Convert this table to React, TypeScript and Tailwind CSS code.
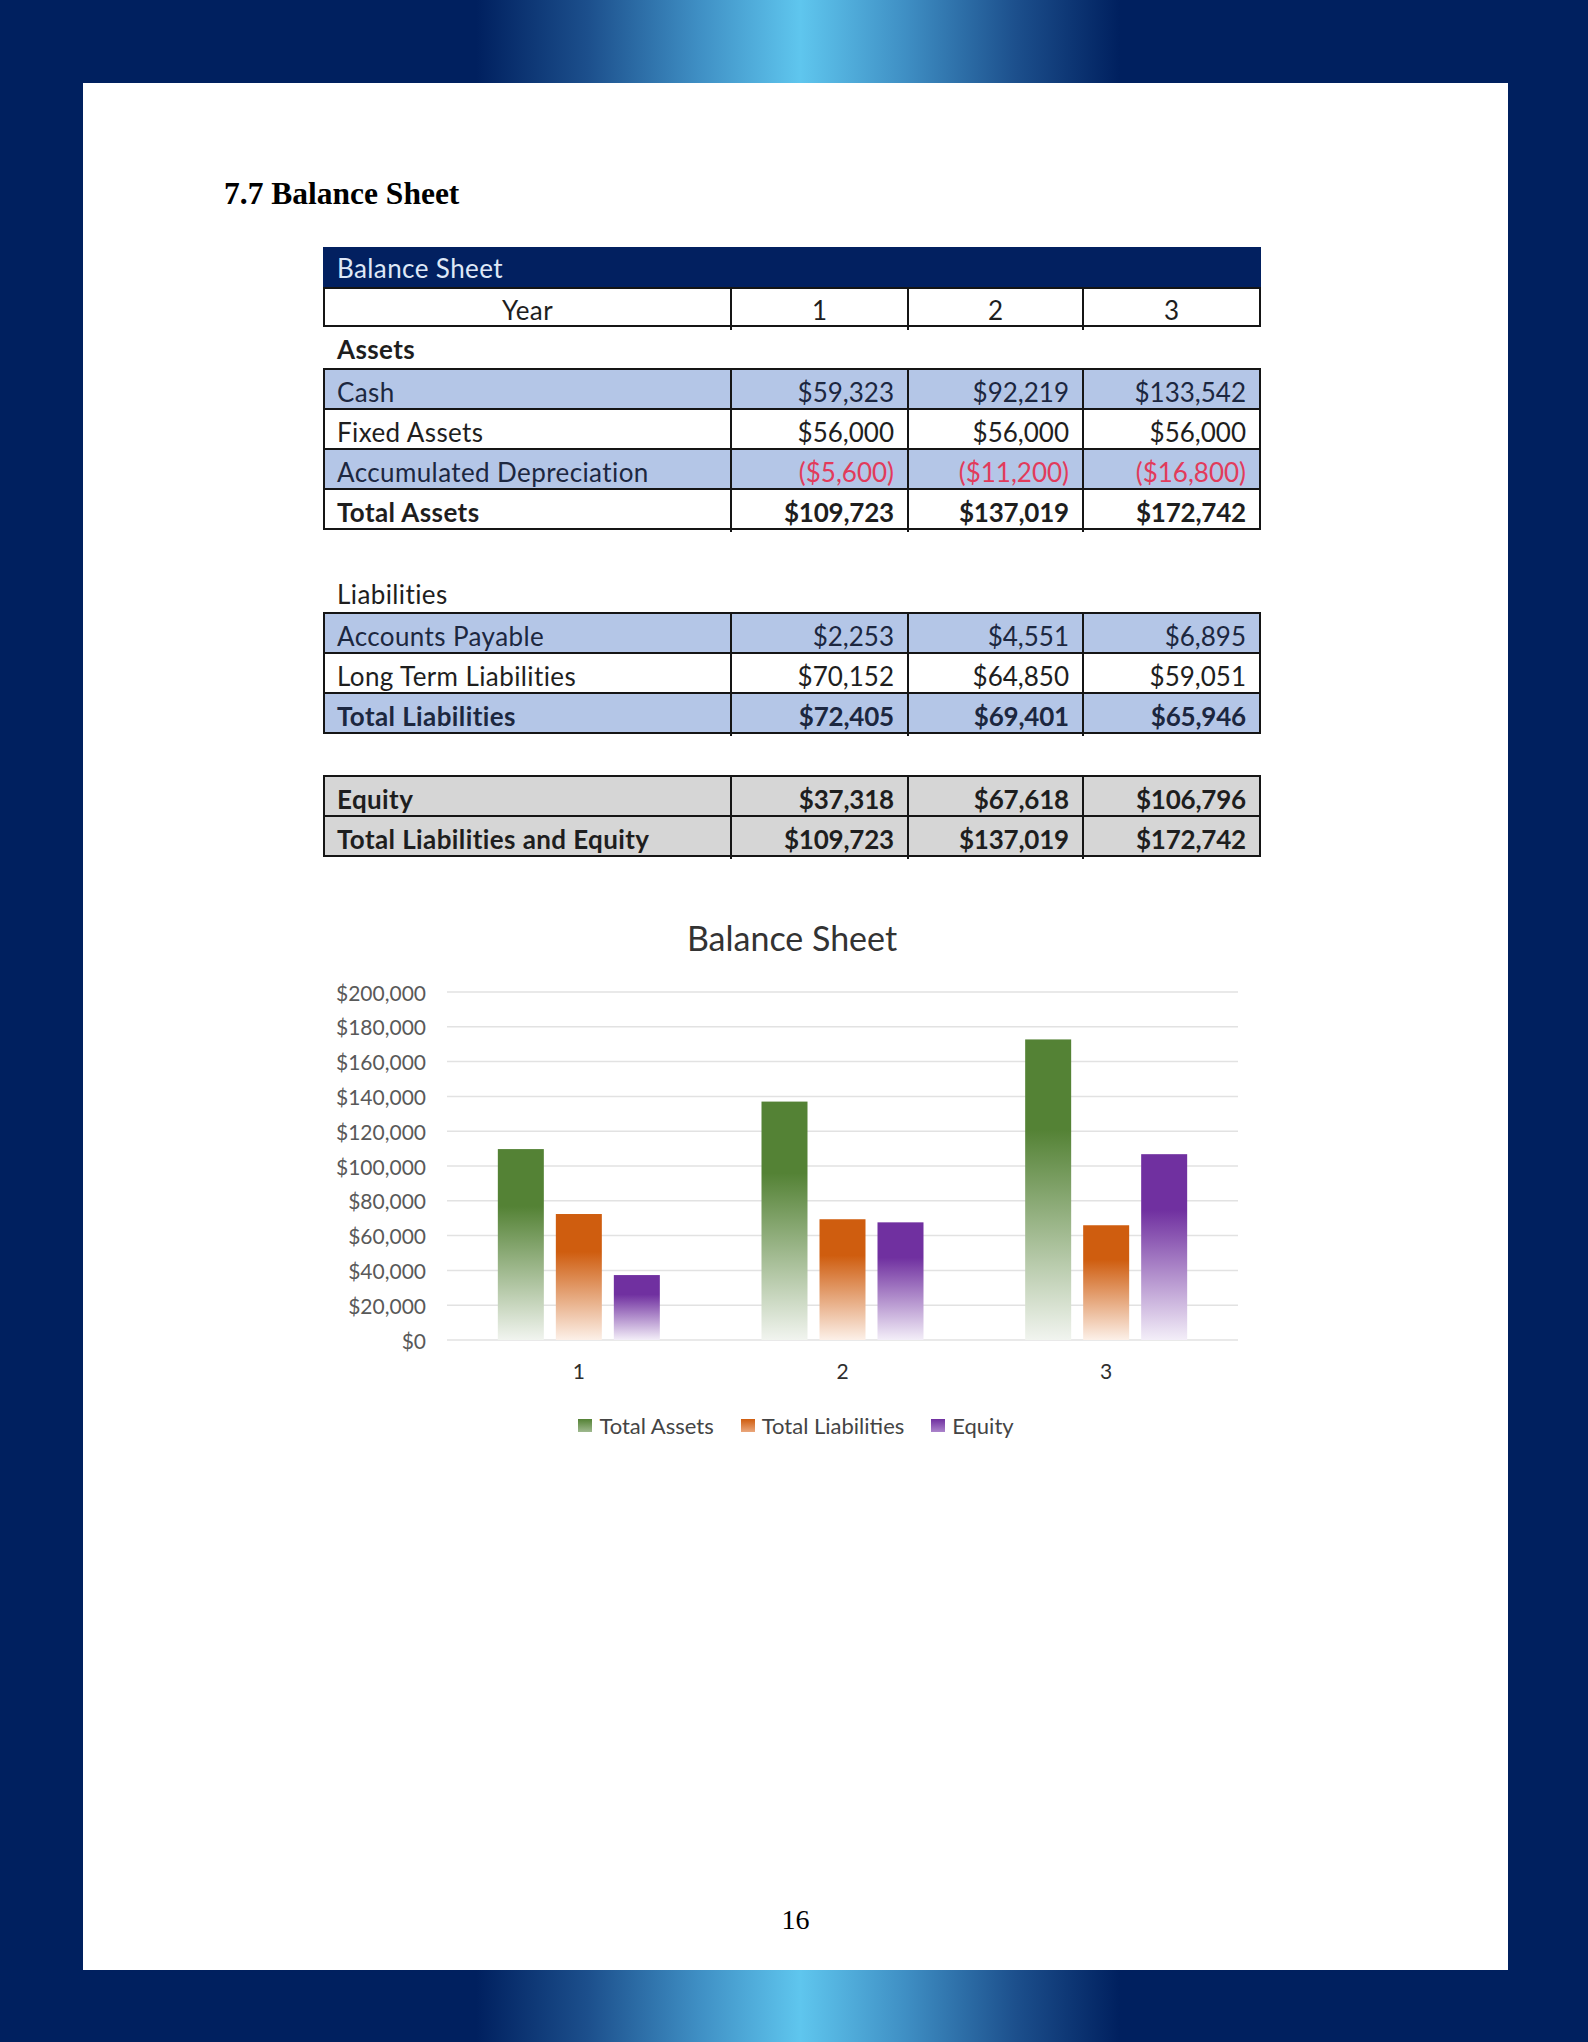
import React from "react";

type Row = { label: string; vals: string[]; tone: "blue" | "white" | "grey"; bold?: boolean; red?: boolean };

const assets: Row[] = [
  { label: "Cash", vals: ["$59,323", "$92,219", "$133,542"], tone: "blue" },
  { label: "Fixed Assets", vals: ["$56,000", "$56,000", "$56,000"], tone: "white" },
  { label: "Accumulated Depreciation", vals: ["($5,600)", "($11,200)", "($16,800)"], tone: "blue", red: true },
  { label: "Total Assets", vals: ["$109,723", "$137,019", "$172,742"], tone: "white", bold: true },
];

const liabilities: Row[] = [
  { label: "Accounts Payable", vals: ["$2,253", "$4,551", "$6,895"], tone: "blue" },
  { label: "Long Term Liabilities", vals: ["$70,152", "$64,850", "$59,051"], tone: "white" },
  { label: "Total Liabilities", vals: ["$72,405", "$69,401", "$65,946"], tone: "blue", bold: true },
];

const equity: Row[] = [
  { label: "Equity", vals: ["$37,318", "$67,618", "$106,796"], tone: "grey", bold: true },
  { label: "Total Liabilities and Equity", vals: ["$109,723", "$137,019", "$172,742"], tone: "grey", bold: true },
];

function TableRow({ row, first }: { row: Row; first: boolean }) {
  const bg = row.tone === "blue" ? "bg-[#b4c6e7]" : row.tone === "grey" ? "bg-[#d6d6d6]" : "bg-white";
  const txt = row.tone === "blue" ? "text-[#1c2740]" : "text-[#1e1e1e]";
  return (
    <div
      className={`grid grid-cols-[405px_177px_175px_177px] ${bg} ${txt} ${
        first ? "h-[38px]" : "h-[40px] border-t-2 border-[#151515]"
      } ${row.bold ? "font-bold" : ""}`}
    >
      <div className="flex items-center pl-[12px] pt-[3px] tracking-[0.4px]">{row.label}</div>
      {row.vals.map((v, i) => (
        <div
          key={i}
          className={`flex items-center justify-end pr-[13px] pt-[3px] border-l-2 border-[#151515] ${
            row.red ? "text-[#e23b5b]" : ""
          } ${row.bold ? "tracking-[-0.2px]" : ""}`}
        >
          {v}
        </div>
      ))}
    </div>
  );
}

function TableBox({ rows, className }: { rows: Row[]; className?: string }) {
  return (
    <div className={`border-2 border-[#151515] ${className ?? ""}`}>
      {rows.map((r, i) => (
        <TableRow key={r.label} row={r} first={i === 0} />
      ))}
    </div>
  );
}

const series = [
  { name: "Total Assets", id: "gGreen", color: "#548235", light: "#f1f4ef", vals: [109723, 137019, 172742] },
  { name: "Total Liabilities", id: "gOrange", color: "#cf5d0f", light: "#fcf0e8", vals: [72405, 69401, 65946] },
  { name: "Equity", id: "gPurple", color: "#7030a0", light: "#f3eef8", vals: [37318, 67618, 106796] },
];

function Chart() {
  const top = 32;
  const step = 34.8;
  const base = top + step * 10;
  const left = 124;
  const right = 915;
  const catW = (right - left) / 3;
  const yLabels = ["$200,000", "$180,000", "$160,000", "$140,000", "$120,000", "$100,000", "$80,000", "$60,000", "$40,000", "$20,000", "$0"];
  return (
    <svg width={938} height={430} className="block">
      <defs>
        {series.map((s) => (
          <linearGradient key={s.id} id={s.id} x1="0" y1="0" x2="0" y2="1">
            <stop offset="0" stopColor={s.color} />
            <stop offset="0.3" stopColor={s.color} />
            <stop offset="1" stopColor={s.light} />
          </linearGradient>
        ))}
      </defs>
      {yLabels.map((l, i) => (
        <g key={l}>
          <line x1={left} x2={right} y1={top + i * step} y2={top + i * step} stroke="#e2e2e2" strokeWidth={1.5} />
          <text
            x={103}
            y={top + i * step}
            textAnchor="end"
            dominantBaseline="central"
            fontFamily="Lato, sans-serif"
            fontSize={21}
            fill="#595959"
          >
            {l}
          </text>
        </g>
      ))}
      {[0, 1, 2].map((c) => {
        const cx = left + catW * (c + 0.5);
        return (
          <g key={c}>
            {series.map((s, si) => {
              const h = (s.vals[c] / 200000) * (step * 10);
              const x = cx + (si - 1) * 58 - 23;
              return <rect key={s.id} x={x} y={base - h} width={46} height={h} fill={`url(#${s.id})`} />;
            })}
            <text
              x={cx}
              y={410}
              textAnchor="middle"
              dominantBaseline="central"
              fontFamily="Lato, sans-serif"
              fontSize={21}
              fill="#2e2e2e"
            >
              {c + 1}
            </text>
          </g>
        );
      })}
    </svg>
  );
}

export default function App() {
  return (
    <div className="w-[1588px] h-[2042px] pt-[83px] pl-[83px] bg-[linear-gradient(90deg,#00205f_0%,#00205f_30%,#1c4f8c_37%,#3f8fc4_44%,#5fc6ee_50.4%,#3f8fc4_57%,#1c4f8c_64%,#00205f_70.5%,#00205f_100%)]">
      <div className="w-[1425px] h-[1887px] bg-white flex flex-col">
        <div className="mt-[93px] ml-[141px] h-[36px] leading-[36px] text-[31.5px] font-bold text-black font-['Liberation_Serif',serif]">
          7.7 Balance Sheet
        </div>

        <div className="ml-[240px] w-[938px] mt-[35px] font-['Lato',sans-serif] text-[26px]">
          <div className="h-[40px] bg-[#022060] text-[#dfe8f7] flex items-center pl-[14px] pt-[3px] tracking-[0.4px]">Balance Sheet</div>
          <div className="border-2 border-[#151515] grid grid-cols-[405px_177px_175px_177px] h-[40px] text-[#1e1e1e]">
            <div className="flex items-center justify-center pt-[2px] tracking-[0.4px]">Year</div>
            <div className="flex items-center justify-center pt-[2px] border-l-2 border-[#151515]">1</div>
            <div className="flex items-center justify-center pt-[2px] border-l-2 border-[#151515]">2</div>
            <div className="flex items-center justify-center pt-[2px] border-l-2 border-[#151515]">3</div>
          </div>
          <div className="h-[41px] flex items-center pl-[14px] pt-[3px] font-bold text-[#1e1e1e] tracking-[0.4px]">Assets</div>
          <TableBox rows={assets} />
          <div className="mt-[44px] h-[38px] flex items-center pl-[14px] pt-[3px] text-[#1e1e1e] tracking-[0.4px]">Liabilities</div>
          <TableBox rows={liabilities} />
          <TableBox rows={equity} className="mt-[41px]" />
        </div>

        <div className="ml-[240px] w-[938px] mt-[59px] h-[44px] leading-[44px] text-center text-[34px] text-[#333333] font-['Lato',sans-serif]">
          Balance Sheet
        </div>
        <div className="ml-[240px] w-[938px]">
          <Chart />
        </div>
        <div className="ml-[244px] w-[938px] mt-[21px] h-[28px] flex items-center justify-center gap-[27px] text-[22px] text-[#444444] font-['Lato',sans-serif]">
          {series.map((s) => (
            <div key={s.id} className="flex items-center gap-[7px]">
              <span
                className={`inline-block w-[14px] h-[13px] ${
                  s.id === "gGreen"
                    ? "bg-[linear-gradient(#548235,#9fb98f)]"
                    : s.id === "gOrange"
                    ? "bg-[linear-gradient(#cf5d0f,#eaa77c)]"
                    : "bg-[linear-gradient(#7030a0,#ab84cb)]"
                }`}
              />
              <span>{s.name}</span>
            </div>
          ))}
        </div>

        <div className="mt-auto mb-[36px] h-[28px] leading-[28px] text-center text-[28px] text-black font-['Liberation_Serif',serif]">
          16
        </div>
      </div>
    </div>
  );
}
